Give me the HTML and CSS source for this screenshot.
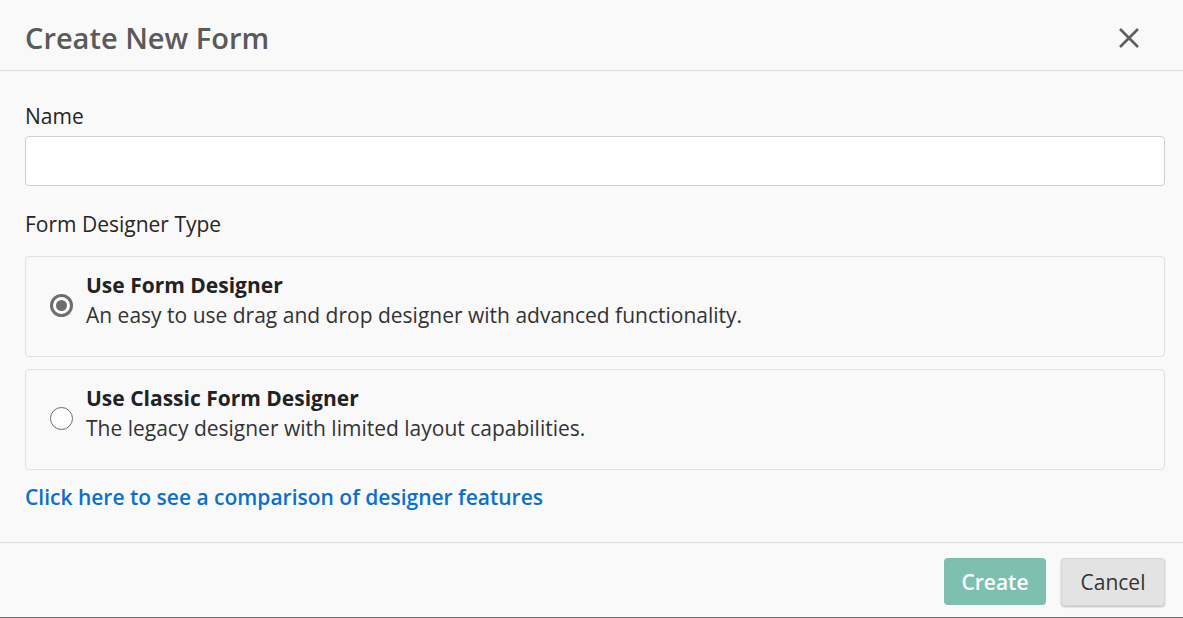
FILE: index.html
```html
<!DOCTYPE html>
<html>
<head>
<meta charset="utf-8">
<link rel="stylesheet" href="styles.css">
</head>
<body>
<div class="dialog">
  <header class="dlg-header">
    <h1 class="dlg-title">Create New Form</h1>
    <button class="close-btn" aria-label="Close">
      <svg width="22" height="22" viewBox="0 0 22 22"><path d="M2 2 L20 20 M20 2 L2 20" stroke="#5f5f5f" stroke-width="2.6" fill="none"/></svg>
    </button>
  </header>
  <main class="dlg-body">
    <label class="field-label" for="name">Name</label>
    <input id="name" class="text-input" type="text">
    <div class="field-label section-label">Form Designer Type</div>
    <label class="option">
      <span class="radio checked"></span>
      <span class="option-text">
        <span class="option-title">Use Form Designer</span>
        <span class="option-desc">An easy to use drag and drop designer with advanced functionality.</span>
      </span>
    </label>
    <label class="option">
      <span class="radio"></span>
      <span class="option-text">
        <span class="option-title">Use Classic Form Designer</span>
        <span class="option-desc">The legacy designer with limited layout capabilities.</span>
      </span>
    </label>
    <a class="compare-link" href="#">Click here to see a comparison of designer features</a>
  </main>
  <footer class="dlg-footer">
    <button class="btn btn-primary">Create</button>
    <button class="btn btn-secondary">Cancel</button>
  </footer>
</div>
</body>
</html>
```
FILE: styles.css
```css
html, body {
  margin: 0;
  padding: 0;
  background: #f9f9f9;
}
body {
  font-family: "Open Sans", "Noto Sans", sans-serif;
  color: #252525;
  width: 1183px;
  height: 618px;
  overflow: hidden;
}
.dialog {
  display: flex;
  flex-direction: column;
  height: 618px;
  box-sizing: border-box;
  border-bottom: 1px solid #707070;
}
.dlg-header {
  height: 64px;
  border-bottom: 1px solid #dcdcdc;
  display: flex;
  align-items: center;
  justify-content: space-between;
  padding: 6px 43px 0 25px;
  box-sizing: content-box;
}
.dlg-title {
  margin: 0;
  font-size: 29px;
  font-weight: 600;
  color: #5a5a5a;
  line-height: 1;
  padding-bottom: 2px;
}
.close-btn {
  background: none;
  border: 0;
  padding: 0;
  width: 22px;
  height: 22px;
  cursor: pointer;
  display: flex;
}
.dlg-body {
  padding: 33px 18px 0 25px;
  display: flex;
  flex-direction: column;
  flex: 1;
}
.field-label {
  display: block;
  font-size: 21px;
  line-height: 24px;
  color: #252525;
  margin-bottom: 8px;
}
.section-label {
  margin-top: 26px;
  margin-bottom: 20px;
}
.text-input {
  height: 50px;
  box-sizing: border-box;
  border: 1px solid #cfcfcf;
  border-radius: 4px;
  background: #fff;
  font: inherit;
  font-size: 21px;
  padding: 0 12px;
  outline: none;
}
.option {
  display: flex;
  align-items: flex-start;
  gap: 13px;
  border: 1px solid #e0e0e0;
  border-radius: 4px;
  padding: 13px 24px 26px 24px;
  margin-bottom: 12px;
  cursor: pointer;
}
.option + .option {
  margin-bottom: 15px;
}
.radio {
  flex: none;
  width: 23px;
  height: 23px;
  box-sizing: border-box;
  border-radius: 50%;
  border: 1px solid #6a6a6a;
  background: #fff;
  margin-top: 24px;
  position: relative;
}
.radio.checked {
  border: 3px solid #6e6e6e;
  background: #fff;
}
.radio.checked::after {
  content: "";
  position: absolute;
  left: 3px;
  top: 3px;
  width: 11px;
  height: 11px;
  border-radius: 50%;
  background: #6e6e6e;
}
.option-text {
  display: flex;
  flex-direction: column;
}
.option-title {
  font-size: 21px;
  line-height: 30px;
  font-weight: 700;
  color: #222;
}
.option-desc {
  font-size: 21px;
  line-height: 30px;
  color: #333;
}
.compare-link {
  font-size: 21px;
  line-height: 24px;
  font-weight: 600;
  color: #0a6fcf;
  text-decoration: none;
  align-self: flex-start;
}
.dlg-footer {
  border-top: 1px solid #dcdcdc;
  height: 75px;
  display: flex;
  justify-content: flex-end;
  align-items: flex-start;
  gap: 15px;
  padding: 15px 18px 0 0;
  box-sizing: border-box;
}
.btn {
  font-family: inherit;
  font-size: 21px;
  height: 47px;
  border-radius: 4px;
  cursor: pointer;
  padding: 0;
}
.btn-primary {
  background: #7dc0b0;
  color: #fff;
  border: 0;
  font-weight: 600;
  width: 102px;
}
.btn-secondary {
  background: #e3e3e3;
  color: #333;
  border: 1px solid #d6d6d6;
  box-shadow: 0 1px 2px rgba(0,0,0,0.25);
  width: 104px;
  height: 48px;
}
```
